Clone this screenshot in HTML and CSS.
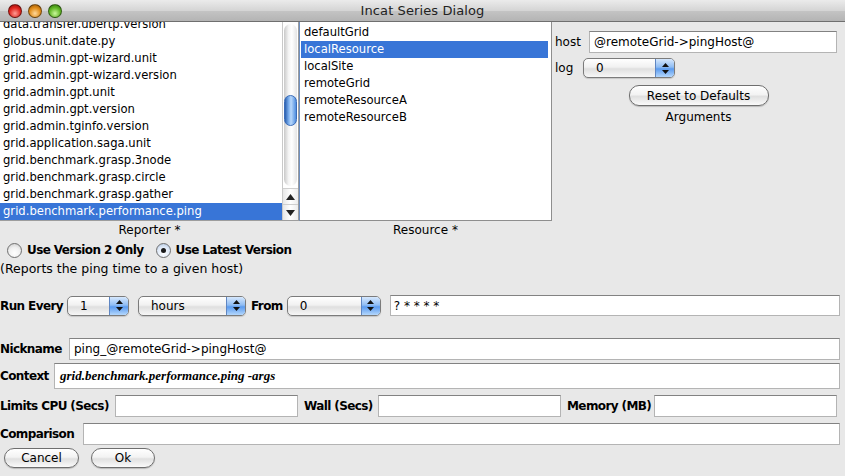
FILE: index.html
```html
<!DOCTYPE html>
<html>
<head>
<meta charset="utf-8">
<link rel="stylesheet" href="styles.css">
</head>
<body>
<div class="window">
  <div class="titlebar">
    <div class="lights">
      <span class="light red"></span>
      <span class="light orange"></span>
      <span class="light green"></span>
    </div>
    <div class="title">Incat Series Dialog</div>
  </div>

  <div class="top">
    <div class="col-left">
      <div class="listbox left-list">
        <div class="items scrolled">
          <div class="item">data.transfer.ubertp.version</div>
          <div class="item">globus.unit.date.py</div>
          <div class="item">grid.admin.gpt-wizard.unit</div>
          <div class="item">grid.admin.gpt-wizard.version</div>
          <div class="item">grid.admin.gpt.unit</div>
          <div class="item">grid.admin.gpt.version</div>
          <div class="item">grid.admin.tginfo.version</div>
          <div class="item">grid.application.saga.unit</div>
          <div class="item">grid.benchmark.grasp.3node</div>
          <div class="item">grid.benchmark.grasp.circle</div>
          <div class="item">grid.benchmark.grasp.gather</div>
          <div class="item sel">grid.benchmark.performance.ping</div>
        </div>
        <div class="scrollbar">
          <div class="track"><div class="thumb"></div></div>
          <div class="arrow up"><svg width="9" height="6" viewBox="0 0 9 6"><path d="M4.5 0 L9 6 L0 6 Z" fill="#222"/></svg></div>
          <div class="arrow down"><svg width="9" height="6" viewBox="0 0 9 6"><path d="M0 0 L9 0 L4.5 6 Z" fill="#222"/></svg></div>
        </div>
      </div>
      <div class="caption">Reporter *</div>
    </div>

    <div class="col-mid">
      <div class="listbox mid-list">
        <div class="items">
          <div class="item">defaultGrid</div>
          <div class="item sel">localResource</div>
          <div class="item">localSite</div>
          <div class="item">remoteGrid</div>
          <div class="item">remoteResourceA</div>
          <div class="item">remoteResourceB</div>
        </div>
      </div>
      <div class="caption">Resource *</div>
    </div>

    <div class="col-right">
      <div class="arg-row host-row">
        <span class="lbl-plain">host</span>
        <div class="field host-field">@remoteGrid-&gt;pingHost@</div>
      </div>
      <div class="arg-row log-row">
        <span class="lbl-plain">log</span>
        <div class="popup w-log"><span class="pv">0</span><span class="pa"><svg width="7" height="11" viewBox="0 0 7 11"><path d="M3.5 0 L7 4 L0 4 Z M0 7 L7 7 L3.5 11 Z" fill="#111"/></svg></span></div>
      </div>
      <div class="reset-wrap"><div class="button reset">Reset to Defaults</div></div>
      <div class="arguments">Arguments</div>
    </div>
  </div>

  <div class="radio-row">
    <span class="radio"></span><span class="bold">Use Version 2 Only</span>
    <span class="radio checked"></span><span class="bold">Use Latest Version</span>
  </div>
  <div class="desc">(Reports the ping time to a given host)</div>

  <div class="run-row">
    <span class="bold">Run Every</span>
    <div class="popup w-num"><span class="pv">1</span><span class="pa"><svg width="7" height="11" viewBox="0 0 7 11"><path d="M3.5 0 L7 4 L0 4 Z M0 7 L7 7 L3.5 11 Z" fill="#111"/></svg></span></div>
    <div class="popup w-unit"><span class="pv">hours</span><span class="pa"><svg width="7" height="11" viewBox="0 0 7 11"><path d="M3.5 0 L7 4 L0 4 Z M0 7 L7 7 L3.5 11 Z" fill="#111"/></svg></span></div>
    <span class="bold from">From</span>
    <div class="popup w-from"><span class="pv">0</span><span class="pa"><svg width="7" height="11" viewBox="0 0 7 11"><path d="M3.5 0 L7 4 L0 4 Z M0 7 L7 7 L3.5 11 Z" fill="#111"/></svg></span></div>
    <div class="field cron">? * * * *</div>
  </div>

  <div class="form-row nick-row">
    <span class="bold lbl-nick">Nickname</span>
    <div class="field grow">ping_@remoteGrid-&gt;pingHost@</div>
  </div>
  <div class="form-row ctx-row">
    <span class="bold lbl-ctx">Context</span>
    <div class="field grow ctx">grid.benchmark.performance.ping -args</div>
  </div>
  <div class="form-row limits-row">
    <span class="bold lbl-cpu">Limits CPU (Secs)</span>
    <div class="field fixed"></div>
    <span class="bold lbl-wall">Wall (Secs)</span>
    <div class="field fixed"></div>
    <span class="bold lbl-mem">Memory (MB)</span>
    <div class="field fixed"></div>
  </div>
  <div class="form-row cmp-row">
    <span class="bold lbl-cmp">Comparison</span>
    <div class="field grow"></div>
  </div>
  <div class="btn-row">
    <div class="button cancel">Cancel</div>
    <div class="button ok">Ok</div>
  </div>
</div>
</body>
</html>
```

FILE: styles.css
```css
* { box-sizing: border-box; }
html, body { margin: 0; padding: 0; }
body {
  width: 845px;
  height: 476px;
  overflow: hidden;
  background: #e8e8e8;
  font-family: "DejaVu Sans", "Liberation Sans", sans-serif;
  font-size: 11.6px;
  color: #000;
}
.window { width: 845px; height: 476px; display: flex; flex-direction: column; }

.titlebar {
  height: 22px;
  flex: none;
  position: relative;
  background: linear-gradient(#ebebeb, #d5d5d5 50%, #c4c4c4 51%, #b4b4b4);
  border-bottom: 1px solid #6f6f6f;
  display: flex;
  align-items: center;
  justify-content: center;
}
.lights { position: absolute; left: 8px; top: 4px; display: flex; gap: 6px; }
.light { width: 14px; height: 14px; border-radius: 50%; border: 1px solid rgba(0,0,0,0.45); }
.red { background: radial-gradient(circle at 50% 70%, #ff9c94 0, #e0251d 55%, #8d0d09 100%); }
.orange { background: radial-gradient(circle at 50% 70%, #ffd89a 0, #e08b17 55%, #8d4f07 100%); }
.green { background: radial-gradient(circle at 50% 70%, #c9f79b 0, #5fb524 55%, #2e6e0b 100%); }
.title { font-size: 13px; color: #222; letter-spacing: 0.1px; }

.top { display: flex; height: 217px; flex: none; }
.col-left { width: 299px; display: flex; flex-direction: column; }
.col-mid { width: 253px; display: flex; flex-direction: column; }
.col-right { flex: 1; display: flex; flex-direction: column; padding-left: 3px; }

.listbox {
  height: 199px;
  background: #fff;
  overflow: hidden;
  position: relative;
  display: flex;
}
.left-list { border-right: 1px solid #9d9d9d; border-bottom: 1px solid #9d9d9d; }
.mid-list { border: 1px solid #8e8e8e; border-top: none; border-left-color: #6f8fbf; padding: 2px 3px 0 1px; }
.items { flex: 1; }
.scrolled { margin-top: -6px; }
.item { height: 17px; line-height: 17px; padding-left: 3px; white-space: nowrap; }
.item.sel { background: #3875d7; color: #fff; }

.scrollbar { width: 16px; display: flex; flex-direction: column; background: #fff; border-left: 1px solid #c9c9c9; }
.track {
  flex: 1;
  margin: 2px 1px 2px 1px;
  border-radius: 7px;
  background: linear-gradient(to right, #c9c9c9, #f4f4f4 35%, #ffffff 60%, #e4e4e4);
  position: relative;
}
.thumb {
  position: absolute;
  left: 0; right: 0;
  top: 71px;
  height: 31px;
  border-radius: 7px;
  background: linear-gradient(to right, #2a5fae, #7fb2f0 35%, #b9d8fb 55%, #4f8ee0);
  border: 1px solid #3b6cb8;
}
.arrow { height: 16px; display: flex; align-items: center; justify-content: center; background: linear-gradient(to right, #e7e7e7, #fff 50%, #ececec); border-top: 1px solid #cfcfcf; }

.caption { height: 18px; line-height: 19px; text-align: center; font-size: 12px; }

.arg-row { display: flex; align-items: center; }
.host-row { margin-top: 8px; height: 23px; }
.log-row { margin-top: 4px; height: 22px; }
.lbl-plain { font-size: 12px; }
.host-row .lbl-plain { width: 34px; }
.log-row .lbl-plain { width: 28px; }
.host-field { flex: 1; margin-right: 8px; height: 22px; padding-left: 4px; font-size: 12px; }

.reset-wrap { display: flex; justify-content: center; margin-top: 6px; padding-right: 3px; }
.arguments { text-align: center; margin-top: 4px; font-size: 12px; padding-right: 3px; }

.field {
  background: #fff;
  border: 1px solid #b4b4b4;
  border-top-color: #828282;
  display: flex;
  align-items: center;
  white-space: nowrap;
  overflow: hidden;
}

.popup {
  height: 20px;
  border: 1px solid #7b7b7b;
  border-radius: 5px;
  background: linear-gradient(#ffffff, #f1f1f1 45%, #dfdfdf 55%, #f7f7f7);
  display: flex;
  align-items: stretch;
  overflow: hidden;
  box-shadow: 0 1px 1px rgba(0,0,0,0.15);
}
.pv { flex: 1; padding-left: 12px; display: flex; align-items: center; font-size: 12px; }
.pa {
  width: 19px;
  display: flex;
  align-items: center;
  justify-content: center;
  background: linear-gradient(#d6e8fd, #8fbcf3 45%, #5b9bef 55%, #b4d7fc);
  border-left: 1px solid #5f86c2;
}
.w-log { width: 92px; }
.w-num { width: 62px; }
.w-unit { width: 108px; }
.w-from { width: 94px; }

.button {
  height: 20px;
  border: 1px solid #6e6e6e;
  border-radius: 10px;
  background: linear-gradient(#ffffff, #f3f3f3 45%, #e0e0e0 55%, #fafafa);
  display: flex;
  align-items: center;
  justify-content: center;
  font-size: 12px;
  box-shadow: 0 1px 1px rgba(0,0,0,0.2);
}
.reset { width: 140px; height: 21px; }

.bold { font-weight: bold; font-size: 12px; letter-spacing: -0.6px; white-space: nowrap; }

.radio-row { display: flex; align-items: center; height: 18px; margin-top: 2px; padding-left: 7px; }
.radio {
  width: 15px; height: 15px;
  border-radius: 50%;
  border: 1px solid #6f6f6f;
  background: radial-gradient(circle at 50% 70%, #ffffff 0, #f0f0f0 50%, #c8c8c8 100%);
  margin-right: 5px;
  position: relative;
  flex: none;
}
.radio.checked { margin-left: 12px; margin-right: 5px; background: radial-gradient(circle at 50% 70%, #ffffff 0, #dfe9f7 55%, #a9bfdc 100%); }
.radio.checked::after {
  content: "";
  position: absolute;
  left: 4px; top: 4px;
  width: 5px; height: 5px;
  border-radius: 50%;
  background: #1a1a1a;
}
.desc { height: 18px; line-height: 18px; margin-top: 1px; font-size: 12.5px; }

.run-row { display: flex; align-items: center; height: 21px; margin-top: 17px; }
.run-row .w-num { margin-left: 4px; }
.run-row .w-unit { margin-left: 9px; }
.from { margin-left: 5px; margin-right: 4px; }
.cron { flex: 1; height: 21px; margin-left: 9px; margin-right: 5px; padding-left: 3px; font-size: 12px; }

.form-row { display: flex; align-items: center; }
.form-row .field { height: 22px; font-size: 12px; padding-left: 4px; }
.grow { flex: 1; margin-right: 5px; }
.lbl-nick { width: 69px; }
.lbl-ctx { width: 54px; }
.lbl-cmp { width: 83px; }
.lbl-cpu { width: 115px; }
.lbl-wall { width: 74px; }
.lbl-mem { width: 87px; }
.nick-row { margin-top: 21px; height: 23px; }
.ctx-row { margin-top: 2px; height: 27px; }
.ctx-row .field { height: 26px; padding-left: 5px; font-family: "Liberation Serif", serif; font-style: italic; font-weight: bold; font-size: 13px; }
.limits-row { margin-top: 4px; height: 25px; }
.limits-row .fixed { width: 183px; margin-right: 6px; }
.limits-row .fixed:last-child { margin-right: 0; }
.cmp-row { margin-top: 3px; height: 25px; }
.btn-row { display: flex; gap: 12px; padding-left: 4px; margin-top: 2px; }
.cancel { width: 75px; }
.ok { width: 64px; }
```
